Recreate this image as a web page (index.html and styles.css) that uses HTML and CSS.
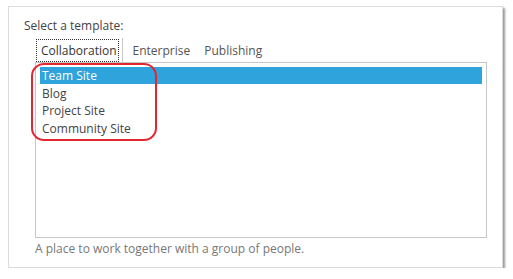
FILE: index.html
```html
<!DOCTYPE html>
<html lang="en">
<head>
    <meta charset="UTF-8">
    <title>Select a template</title>
    <link rel="stylesheet" href="styles.css">
</head>
<body>
    <div class="dialog">
        <div class="label">Select a template:</div>
        <div class="picker">
            <div class="tabs">
                <div class="tab active"><span class="focus">Collaboration</span></div>
                <div class="tab">Enterprise</div>
                <div class="tab">Publishing</div>
            </div>
            <div class="listbox">
                <div class="item selected">Team Site</div>
                <div class="item">Blog</div>
                <div class="item">Project Site</div>
                <div class="item">Community Site</div>
                <div class="callout"></div>
            </div>
            <p class="desc">A place to work together with a group of people.</p>
        </div>
    </div>
</body>
</html>
```

FILE: styles.css
```css
body {
    margin: 0;
    padding: 6px 0 0 8px;
    background: #fff;
    font-family: "Open Sans", Arial, sans-serif;
    font-size: 12px;
    color: #444;
}
.dialog {
    width: 493px;
    height: 260px;
    border: 1px solid #dcdcdc;
    box-shadow: 2px 2px 2px #9a9a9a;
    background: #fff;
}
.label {
    padding: 10px 0 0 15px;
    line-height: 17px;
}
.picker {
    padding: 0 0 0 26px;
    margin-top: 4px;
}
.tabs {
    display: flex;
    height: 24px;
    align-items: stretch;
}
.tab {
    display: flex;
    align-items: center;
    padding: 1px 6px 0 8px;
    color: #555;
}
.tab.active {
    padding: 1px 3px 0 1px;
    border-right: 1px solid #c8c8c8;
    margin-right: 2px;
}
.focus {
    border: 1px dotted #333;
    padding: 2px 1px 2px 4px;
    color: #333;
}
.listbox {
    position: relative;
    width: 442px;
    height: 170px;
    border: 1px solid #c6c6c6;
    padding: 4px 4px 0 4px;
}
.item {
    height: 17.5px;
    line-height: 17px;
    padding-left: 2px;
    color: #444;
}
.item.selected {
    height: 17px;
    margin-bottom: 0.5px;
    background: #2ea3dc;
    color: #fff;
}
.callout {
    position: absolute;
    left: -5px;
    top: 0;
    width: 122px;
    height: 74px;
    border: 2px solid #e3262f;
    border-radius: 13px;
}
.desc {
    margin: 3px 0 0 0;
    color: #777;
    line-height: 16px;
}
```
